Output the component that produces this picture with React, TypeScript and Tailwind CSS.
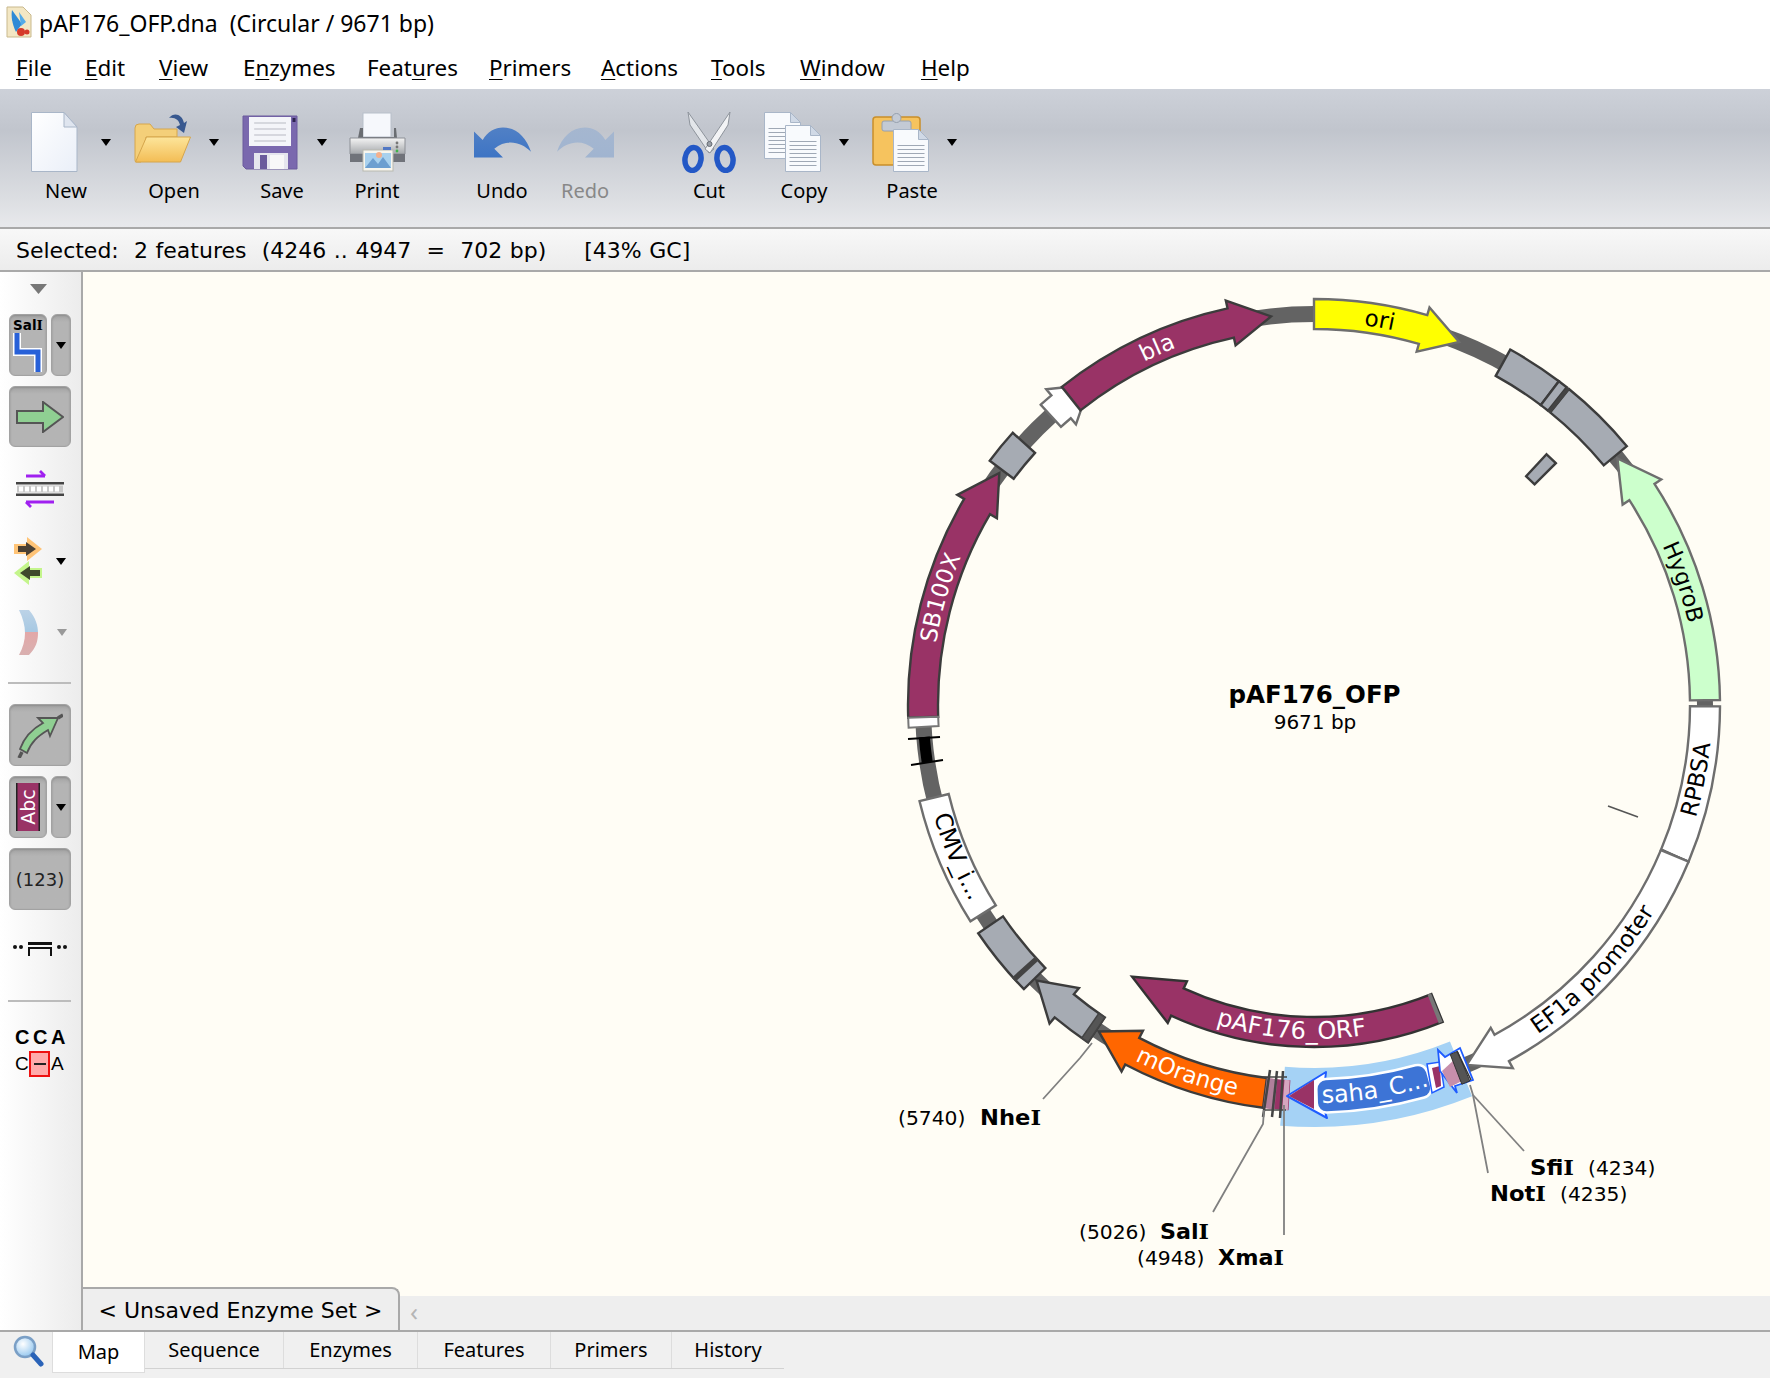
import React from "react";

const CX = 1314;
const CY = 705;
const pt = (r: number, t: number) => {
  const a = (t * Math.PI) / 180;
  return `${(CX + r * Math.sin(a)).toFixed(2)} ${(CY - r * Math.cos(a)).toFixed(2)}`;
};
const arcTo = (r: number, t0: number, t1: number) =>
  `A${r} ${r} 0 ${Math.abs(t1 - t0) > 180 ? 1 : 0} ${t1 > t0 ? 1 : 0} ${pt(r, t1)}`;
const arc = (r: number, t0: number, t1: number) => `M${pt(r, t0)} ${arcTo(r, t0, t1)}`;
const band = (t0: number, t1: number, r0 = 376, r1 = 406) =>
  `M${pt(r1, t0)} ${arcTo(r1, t0, t1)} L${pt(r0, t1)} ${arcTo(r0, t1, t0)} Z`;
const arrow = (t0: number, tb: number, tip: number, rc = 391) =>
  `M${pt(rc + 15, t0)} ${arcTo(rc + 15, t0, tb)} L${pt(rc + 23, tb)} L${pt(rc, tip)} L${pt(rc - 23, tb)} L${pt(rc - 15, tb)} ${arcTo(rc - 15, tb, t0)} Z`;

const MAROON = "#993366";
const FONT = "'DejaVu Sans', Verdana, sans-serif";

type Lab = { id: string; text: string; r: number; from: number; to: number; fill: string; size: number };
const labels: Lab[] = [
  { id: "l1", text: "SB100X", r: 383, from: 256, to: 316, fill: "#fff", size: 23 },
  { id: "l2", text: "bla", r: 383, from: 316, to: 356.6, fill: "#fff", size: 23 },
  { id: "l3", text: "ori", r: 383, from: -10, to: 29.4, fill: "#000", size: 23 },
  { id: "l4", text: "HygroB", r: 383, from: 41.6, to: 101.6, fill: "#000", size: 22.5 },
  { id: "l5", text: "RPBSA", r: 398, from: 131, to: 71, fill: "#000", size: 23 },
  { id: "l6", text: "EF1a promoter", r: 398, from: 170, to: 97, fill: "#000", size: 23 },
  { id: "l7", text: "saha_C...", r: 398, from: 191, to: 151, fill: "#fff", size: 24 },
  { id: "l8", text: "mOrange", r: 398, from: 229, to: 169, fill: "#fff", size: 23 },
  { id: "l9", text: "CMV_i...", r: 396, from: 277, to: 217, fill: "#000", size: 23.5 },
  { id: "l10", text: "pAF176_ORF", r: 334, from: 224, to: 144, fill: "#fff", size: 24 },
];

const SERIF_BOLD = "'DejaVu Serif', serif";

const EnzymeName = ({ x, y, w, name }: { x: number; y: number; w: number; name: string }) => (
  <text x={x} y={y} fontSize={21} fontWeight={700} textLength={w} lengthAdjust="spacingAndGlyphs" fill="#000">
    {name}
    <tspan fontFamily={SERIF_BOLD}>I</tspan>
  </text>
);

function arrowInner() {
  const rc = 327;
  const t0 = 157.9;
  const tb = 204.7;
  const tip = 213.8;
  return `M${pt(rc + 15, t0)} ${arcTo(rc + 15, t0, tb)} L${pt(rc + 23, tb)} L${pt(rc, tip)} L${pt(rc - 23, tb)} L${pt(rc - 15, tb)} ${arcTo(rc - 15, tb, t0)} Z`;
}

function Plasmid() {
  const st = { stroke: "#3c3c3c", strokeWidth: 2.4 };
  const lt = { stroke: "#6e6e6e", strokeWidth: 2.4 };
  return (
    <svg viewBox="83 272 1687 1024" width={1687} height={1024} className="block" style={{ fontFamily: FONT }}>
      <defs>
        {labels.map((l) => (
          <path key={l.id} id={l.id} d={arc(l.r, l.from, l.to)} />
        ))}
      </defs>

      <circle cx={CX} cy={CY} r={391} fill="none" stroke="#636363" strokeWidth={16} />

      <path d={band(261.6, 265.3, 391 - 5.5, 391 + 5.5)} fill="#000" />
      <line x1={908} y1={739} x2={940} y2={737} stroke="#000" strokeWidth={2} />
      <line x1={911} y1={765} x2={943} y2={760} stroke="#000" strokeWidth={2} />

      <path d={arrow(268.2, 300.5, 306.4)} fill={MAROON} {...st} />
      <path d={band(266.8, 268.2, 376, 406)} fill="#fff" stroke="#777" strokeWidth={2} />
      <path d={band(307, 312.1)} fill="#a6abb3" {...st} />
      <path d={arrow(317.7, 319.7, 325)} fill="#fff" {...lt} />
      <path d={arrow(321.6, 347.7, 353.7)} fill={MAROON} {...st} />
      <path d={arrow(0, 16.2, 21.8)} fill="#ffff00" {...lt} />
      <path d={band(28.9, 37.1)} fill="#a6abb3" {...st} />
      <path d={band(37.1, 38.5)} fill="#a6abb3" {...st} />
      <path d={band(38.9, 50.4)} fill="#a6abb3" {...st} />
      <path d={band(38.6, 38.9)} fill="#444" stroke="#444" strokeWidth={1.5} />
      <path d={band(42.85, 45, 312, 342)} fill="#a6abb3" {...st} />
      <path d={arrow(89.3, 57, 50.9)} fill="#ccffcc" {...lt} />
      <path d={band(90.2, 112.7)} fill="#fff" {...lt} />
      <line x1={1662} y1={850} x2={1688} y2={862} stroke="#666" strokeWidth={3} />
      <path d={arrow(112.7, 151.3, 157)} fill="#fff" {...lt} />

      <path d={arrow(213.8, 219.7, 225.2)} fill="#a6abb3" {...st} />
      <path d={band(213.8, 214.9)} fill="#555" stroke="#444" strokeWidth={1.5} />
      <path d={arrow(187.2, 207.7, 213.4)} fill="#ff6600" {...st} />
      <path d={band(225.6, 235.8)} fill="#a6abb3" {...st} />
      <path d={band(227.3, 227.8)} fill="#444" stroke="#444" strokeWidth={2} />
      <path d={band(237.8, 256.3)} fill="#fff" {...lt} />

      <path d={arrowInner()} fill={MAROON} stroke="#333" strokeWidth={2.4} />
      <path d={band(157.9, 158.6, 311, 342)} fill="#777" stroke="none" />

      <path d={band(158, 184.6, 363, 422)} fill="#a5d2f5" />

      <path d={band(183.6, 187, 376, 406)} fill={MAROON} />
      <path d={band(185.6, 187.2, 376, 406)} fill="#b07f9b" />
      <path d={band(183.7, 184.5, 376, 406)} fill="#d5a6bf" />
      <line x1={1270} y1={1070} x2={1263} y2={1117} stroke="#444" strokeWidth={2.5} />
      <line x1={1277} y1={1071} x2={1272} y2={1117} stroke="#444" strokeWidth={2.5} />
      <line x1={1283} y1={1071} x2={1280} y2={1118} stroke="#444" strokeWidth={2.5} />
      <line x1={1263} y1={1077} x2={1287} y2={1077} stroke="#444" strokeWidth={1.5} />
      <line x1={1263} y1={1110} x2={1286} y2={1110} stroke="#444" strokeWidth={1.5} />

      <polygon points="1287,1096 1326,1072 1325,1081 1325,1112 1327,1118" fill="#fff" stroke="#1f5cff" strokeWidth={2} strokeLinejoin="round" />
      <polygon points="1289,1096 1314,1080 1314,1109" fill={MAROON} />
      <path d={band(164.3, 178.2, 384, 398)} fill="#fff" stroke="#fff" strokeWidth={22} strokeLinejoin="round" />
      <path d={band(164.3, 178.2, 384, 398)} fill="#3d74d6" stroke="#3d74d6" strokeWidth={17} strokeLinejoin="round" />

      <polygon points="1427,1064 1440,1062 1444,1087 1432,1093" fill="#fff" stroke="#1f5cff" strokeWidth={1.5} />
      <polygon points="1432,1068 1440,1066 1441,1086 1436,1088" fill={MAROON} />
      <polygon points="1438,1050 1440,1071 1457,1093 1455,1086 1473,1080 1460,1048 1445,1057" fill="#fff" stroke="#1f5cff" strokeWidth={1.8} />
      <polygon points="1442,1071 1455,1059 1464,1080 1450,1087" fill="#c78fab" />
      <path d={band(157.5, 158.7, 375, 407)} fill="#555" stroke="#333" strokeWidth={1} />
      <line x1={1457} y1={1051} x2={1471} y2={1080} stroke="#333" strokeWidth={1.5} />

      <polyline points="1092,1043 1080,1058 1043,1099" fill="none" stroke="#808080" strokeWidth={1.8} />
      <polyline points="1264,1110 1263,1124 1213,1212" fill="none" stroke="#808080" strokeWidth={1.8} />
      <polyline points="1284,1105 1284,1235" fill="none" stroke="#808080" strokeWidth={1.8} />
      <polyline points="1470,1085 1473,1095 1488,1173" fill="none" stroke="#808080" strokeWidth={1.8} />
      <polyline points="1473,1095 1524,1151" fill="none" stroke="#808080" strokeWidth={1.8} />
      <line x1={1608} y1={806} x2={1638} y2={817} stroke="#555" strokeWidth={1.6} />

      {labels.map((l) => (
        <text key={l.id} fontSize={l.size} fill={l.fill} textAnchor="middle">
          <textPath href={`#${l.id}`} startOffset="50%">
            {l.text}
          </textPath>
        </text>
      ))}

      <text x={1314.5} y={703} fontSize={24.5} fontWeight={700} textAnchor="middle" fill="#000">pAF176_OFP</text>
      <text x={1315} y={729} fontSize={20} textAnchor="middle" fill="#000">9671 bp</text>

      <text x={898} y={1125} fontSize={20.3} fill="#000">(5740)</text>
      <EnzymeName x={980} y={1125} w={61} name="Nhe" />
      <text x={1079} y={1239} fontSize={20.3} fill="#000">(5026)</text>
      <EnzymeName x={1160} y={1239} w={49} name="Sal" />
      <text x={1137} y={1265} fontSize={20.3} fill="#000">(4948)</text>
      <EnzymeName x={1218} y={1265} w={66} name="Xma" />
      <EnzymeName x={1530} y={1175} w={44} name="Sfi" />
      <text x={1588} y={1175} fontSize={20.3} fill="#000">(4234)</text>
      <EnzymeName x={1490} y={1201} w={56} name="Not" />
      <text x={1560} y={1201} fontSize={20.3} fill="#000">(4235)</text>
    </svg>
  );
}

const Caret = ({ gray }: { gray?: boolean }) => (
  <svg width="10" height="7" viewBox="0 0 10 7" className="block">
    <polygon points="0,0 10,0 5,7" fill={gray ? "#999" : "#000"} />
  </svg>
);

const NewIcon = () => (
  <svg width="57" height="60" viewBox="0 0 57 60">
    <defs>
      <linearGradient id="ng" x1="0" y1="0" x2="1" y2="1">
        <stop offset="0" stopColor="#ffffff" />
        <stop offset="1" stopColor="#eaeff8" />
      </linearGradient>
    </defs>
    <path d="M5.500 .5H38L51 15V59.500H5.500Z" fill="url(#ng)" stroke="#a9b6c8" />
    <path d="M38 .5V15H51Z" fill="#dfe5ef" stroke="#a9b6c8" />
  </svg>
);

const OpenIcon = () => (
  <svg width="57" height="60" viewBox="0 0 57 60">
    <defs>
      <linearGradient id="og" x1="0" y1="0" x2="0" y2="1">
        <stop offset="0" stopColor="#fde59b" />
        <stop offset="1" stopColor="#f3bd55" />
      </linearGradient>
    </defs>
    <path d="M1 16Q1 12 5 12H16L20 17H43V25H12L7 50H2Q1 50 1 48Z" fill="#f4cf79" stroke="#d6a64c" />
    <path d="M13 25H57L47 50H2Z" transform="translate(-0.5 0)" fill="url(#og)" stroke="#d6a64c" />
    <path d="M35 6C40 0 48 2 50 11L53 9L50 21L42 15L46 13C45 8 41 5 35 6Z" fill="#38588f" />
  </svg>
);

const SaveIcon = () => (
  <svg width="57" height="60" viewBox="0 0 57 60">
    <path d="M1 4H55V57H4L1 54Z" fill="#7a68ae" stroke="#6a5a9c" />
    <rect x="7" y="5" width="42" height="29" fill="#f4f5f9" />
    <g stroke="#c2c4cc" strokeWidth="1.2">
      <line x1="12" y1="11" x2="44" y2="11" />
      <line x1="12" y1="17" x2="44" y2="17" />
      <line x1="12" y1="23" x2="44" y2="23" />
      <line x1="12" y1="29" x2="44" y2="29" />
    </g>
    <rect x="50.500" y="6" width="3" height="4" fill="#2d2350" />
    <path d="M12 57V41H46V57Z" fill="#e6e6ee" />
    <rect x="18" y="43" width="7" height="14" fill="#6a5a9c" />
    <rect x="28" y="43" width="14" height="14" fill="#f8f8f8" />
  </svg>
);

const PrintIcon = () => (
  <svg width="57" height="60" viewBox="0 0 57 60">
    <defs>
      <linearGradient id="pg" x1="0" y1="0" x2="0" y2="1">
        <stop offset="0" stopColor="#f4f4f4" />
        <stop offset="1" stopColor="#a5a8ac" />
      </linearGradient>
    </defs>
    <rect x="14" y="1" width="28" height="24" fill="#f6f8fc" stroke="#b8bfca" />
    <path d="M11 16H14V25H45V16H47L48 26H9Z" fill="#6a6d72" />
    <path d="M1 26H56V42H1Z" fill="url(#pg)" stroke="#8d9096" />
    <rect x="1" y="42" width="55" height="8" fill="#70737a" />
    <circle cx="48" cy="31" r="1.400" fill="#777" />
    <circle cx="48" cy="35" r="1.400" fill="#777" />
    <circle cx="48" cy="39" r="1.400" fill="#41b34a" />
    <rect x="14" y="38" width="30" height="21" fill="#f8f6ee" stroke="#b9b9b0" />
    <rect x="16" y="41" width="26" height="15" fill="#a9d1ee" />
    <path d="M16 56L24 46L29 52L34 45L42 56Z" fill="#6d9fd0" />
    <circle cx="30" cy="43" r="3" fill="#f4b08c" />
    <rect x="34" y="35" width="8" height="3" fill="#5278c4" />
  </svg>
);

const UndoIcon = ({ flip, fill }: { flip?: boolean; fill: string }) => (
  <svg width="59" height="31" viewBox="0 0 59 31" style={flip ? { transform: "scaleX(-1)" } : undefined}>
    <defs>
      <linearGradient id={flip ? "rg" : "ug"} x1="0" y1="0" x2="0" y2="1">
        <stop offset="0" stopColor={fill} stopOpacity="0.85" />
        <stop offset="1" stopColor={fill} />
      </linearGradient>
    </defs>
    <path d="M0 4L9 13C14 4 22 0 30 0C44 0 54 10 59 25C49 15 34 11 21 22L30 31H0Z" fill={`url(#${flip ? "rg" : "ug"})`} />
  </svg>
);

const CutIcon = () => (
  <svg width="57" height="62" viewBox="0 0 57 62">
    <path d="M7 1L33 38L28 42L9 14Z" fill="#e3e6ea" stroke="#8e949c" />
    <path d="M49 1L24 38L29 42L47 14Z" fill="#f3f4f6" stroke="#8e949c" />
    <g fill="none" stroke="#2358c6" strokeWidth="5.500">
      <ellipse cx="12" cy="48" rx="8" ry="11.500" transform="rotate(8 12 48)" />
      <ellipse cx="44" cy="48" rx="8" ry="11.500" transform="rotate(-8 44 48)" />
    </g>
    <circle cx="28.500" cy="33" r="2.500" fill="#9aa0a8" stroke="#676c74" />
  </svg>
);

const DocLines = ({ x, y, w, h, fold = 10 }: { x: number; y: number; w: number; h: number; fold?: number }) => {
  const lines = [];
  for (let yy = y + 16; yy < y + h - 3; yy += 4) lines.push(yy);
  return (
    <g>
      <path d={`M${x} ${y}H${x + w - fold}L${x + w} ${y + fold}V${y + h}H${x}Z`} fill="#f8fafd" stroke="#a9b6c8" />
      <path d={`M${x + w - fold} ${y}V${y + fold}H${x + w}Z`} fill="#d0d9e6" stroke="#a9b6c8" />
      {lines.map((yy) => (
        <line key={yy} x1={x + 4} x2={x + w - 4} y1={yy} y2={yy} stroke="#9fa8b5" strokeWidth="1" />
      ))}
    </g>
  );
};

const CopyIcon = () => (
  <svg width="57" height="60" viewBox="0 0 57 60">
    <DocLines x={0.5} y={0.5} w={36} h={46} />
    <DocLines x={21.5} y={13.5} w={35} h={46} />
  </svg>
);

const PasteIcon = () => (
  <svg width="57" height="60" viewBox="0 0 57 60">
    <rect x="1" y="5" width="47" height="48" rx="3" fill="#f6c35e" stroke="#c98f2a" strokeWidth="1.500" />
    <rect x="10" y="9" width="29" height="10" rx="2" fill="#c3cad5" stroke="#96a0ae" />
    <circle cx="24.500" cy="6" r="4.500" fill="#c3cad5" stroke="#96a0ae" />
    <DocLines x={21.5} y={17.5} w={35} h={42} />
  </svg>
);

type Btn = { label: string; w: string; icon: React.ReactNode; caret?: boolean; gray?: boolean };

const ToolBtn = ({ label, w, icon, caret, gray }: Btn) => (
  <div className={`flex flex-col ${w}`}>
    <div className={`flex items-center h-[62px] ${caret ? "pl-[14px] gap-[18px]" : "justify-center"}`}>
      <div className="flex items-center justify-center w-[57px] h-[62px] shrink-0">{icon}</div>
      {caret && <Caret />}
    </div>
    <div className={`text-center text-[20px] leading-[28px] mt-[4px] ${gray ? "text-[#888888]" : "text-black"}`}>{label}</div>
  </div>
);

const Menu = ({ first, rest, w }: { first: string; rest: string; w: string }) => {
  return (
    <div className={`${w} shrink-0`}>
      <span className="underline decoration-1 underline-offset-[3px]">{first}</span>
      {rest}
    </div>
  );
};

const GrayBtn = ({ className, children }: { className: string; children?: React.ReactNode }) => (
  <div className={`flex items-center justify-center rounded-[6px] border border-[#a2a2a2] bg-linear-to-b from-[#a4a4a4] to-[#b4b4b4] to-[12%] shadow-[inset_0_1px_2px_#8e8e8e] ${className}`}>
    {children}
  </div>
);

const Divider = ({ className }: { className: string }) => <div className={`ml-[8px] w-[63px] h-[2px] bg-[#bcbcbc] ${className}`} />;

function LeftPanel() {
  return (
    <div className="w-[81px] shrink-0 border-r-2 border-[#a9a9a9] box-content bg-linear-to-r from-white to-[#ececec] h-[1058px] overflow-hidden" style={{ fontFamily: FONT }}>
      <svg width="17" height="10" viewBox="0 0 17 10" className="block ml-[30px] mt-[12px]">
        <polygon points="0,0 17,0 8.500,10" fill="#777" />
      </svg>
      <div className="flex gap-[4px] ml-[9px] mt-[20px]">
        <GrayBtn className="w-[38px] h-[62px] items-start">
          <svg width="36" height="58" viewBox="0 0 36 58">
            <text x="18" y="15" textAnchor="middle" fontSize="13.500" fontWeight="700" fill="#000">
              Sal<tspan fontFamily={SERIF_BOLD}>I</tspan>
            </text>
            <path d="M7 18V37H28V57" fill="none" stroke="#fff" strokeWidth="8" />
            <path d="M7 18V37H28V57" fill="none" stroke="#2760d8" strokeWidth="5" />
          </svg>
        </GrayBtn>
        <GrayBtn className="w-[20px] h-[62px]">
          <Caret />
        </GrayBtn>
      </div>
      <GrayBtn className="ml-[9px] mt-[10px] w-[62px] h-[61px]">
        <svg width="48" height="32" viewBox="0 0 48 32">
          <path d="M1 10H27V1L47 16L27 31V22H1Z" fill="#8fcf92" stroke="#555" strokeWidth="2" />
        </svg>
      </GrayBtn>
      <svg width="48" height="38" viewBox="0 0 48 38" className="block ml-[16px] mt-[23px]">
        <path d="M10 6H29M24 1L29 6" fill="none" stroke="#a020f0" strokeWidth="2.800" />
        <path d="M10 32H38M10 32L15 37" fill="none" stroke="#a020f0" strokeWidth="2.800" />
        <rect x="0" y="12" width="48" height="2.500" fill="#444" />
        <rect x="0" y="23.500" width="48" height="2.500" fill="#444" />
        <rect x="1" y="15.500" width="46" height="7" fill="#c8c8c8" />
        <g fill="#fff">
          {[3, 9, 15, 21, 27, 33, 39].map((x) => (
            <rect key={x} x={x} y="16.500" width="4" height="5" />
          ))}
        </g>
      </svg>
      <div className="flex items-center mt-[29px] ml-[14px] h-[48px]">
        <svg width="28" height="48" viewBox="0 0 28 48" className="shrink-0">
          <path d="M0 7H13V0L28 12L13 24V17H0Z" fill="#ffc477" />
          <path d="M12 9V5L22 12L12 19V15H4V9Z" fill="#4a4034" />
          <path d="M28 31H15V24L0 36L15 48V41H28Z" fill="#c4f58c" />
          <path d="M16 33V29L6 36L16 43V39H26V33Z" fill="#3f4a2c" />
        </svg>
        <div className="ml-[14px]">
          <Caret />
        </div>
      </div>
      <div className="flex items-center mt-[25px] ml-[19px] h-[45px]">
        <svg width="20" height="45" viewBox="0 0 20 45" className="shrink-0">
          <defs>
            <linearGradient id="arcg" x1="0" y1="0" x2="0" y2="1">
              <stop offset="0" stopColor="#bcd3e7" />
              <stop offset="0.5" stopColor="#a6c8e2" />
              <stop offset="0.5" stopColor="#e2a8a8" />
              <stop offset="1" stopColor="#d9b0b0" />
            </linearGradient>
          </defs>
          <path d="M0 0H10C17 8 19 16 19 23C19 31 17 38 10 45H0C4 38 6 30 6 23C6 16 4 8 0 0Z" fill="url(#arcg)" />
        </svg>
        <div className="ml-[18px]">
          <Caret gray />
        </div>
      </div>
      <Divider className="mt-[27px]" />
      <GrayBtn className="ml-[9px] mt-[20px] w-[62px] h-[62px]">
        <svg width="46" height="46" viewBox="0 0 46 46">
          <path d="M3 37L10 41C14 30 21 24 31 18L33 24L41 6L21 6L26 11C15 17 7 26 3 37Z" fill="#8fcf92" stroke="#555" strokeWidth="1.800" />
          <path d="M41 6L46 3M5 40L2 46" stroke="#555" strokeWidth="3.500" />
        </svg>
      </GrayBtn>
      <div className="flex gap-[4px] ml-[9px] mt-[10px]">
        <GrayBtn className="w-[38px] h-[62px]">
          <svg width="24" height="48" viewBox="0 0 24 48">
            <rect x="0" y="0" width="24" height="48" fill="#993366" />
            <rect x="0" y="0" width="1.500" height="48" fill="#222" />
            <rect x="22.500" y="0" width="1.500" height="48" fill="#222" />
            <text x="12" y="24" transform="rotate(-90 12 24)" textAnchor="middle" dominantBaseline="central" fontSize="19" fill="#fff">Abc</text>
          </svg>
        </GrayBtn>
        <GrayBtn className="w-[20px] h-[62px]">
          <Caret />
        </GrayBtn>
      </div>
      <GrayBtn className="ml-[9px] mt-[10px] w-[62px] h-[62px] text-[18px] text-[#222]">(123)</GrayBtn>
      <svg width="54" height="16" viewBox="0 0 54 16" className="block ml-[13px] mt-[30px]">
        <g fill="#111">
          <circle cx="2" cy="7" r="2" />
          <circle cx="8" cy="7" r="2" />
          <circle cx="46" cy="7" r="2" />
          <circle cx="52" cy="7" r="2" />
          <rect x="15" y="2" width="24" height="3" />
          <path d="M15 7H39V16H37V9H17V16H15Z" />
        </g>
      </svg>
      <Divider className="mt-[44px]" />
      <div className="ml-[15px] mt-[23px] grid grid-cols-[18px_18px_18px] text-[20px] leading-[24px] font-bold text-black" style={{ fontFamily: "'Liberation Sans', Arial, sans-serif" }}>
        <span>C</span>
        <span>C</span>
        <span>A</span>
      </div>
      <div className="ml-[15px] mt-[2px] flex items-center text-[19px] h-[26px] text-black" style={{ fontFamily: "'Liberation Sans', Arial, sans-serif" }}>
        <span className="w-[14px]">C</span>
        <span className="w-[21px] h-[26px] border-2 border-[#ee1111] bg-[#ffaaaa] flex items-center justify-center">
          <span className="block w-[12px] h-[2px] bg-[#222]" />
        </span>
        <span className="ml-[1px]">A</span>
      </div>
    </div>
  );
}

export default function App() {
  return (
    <div className="w-[1770px] h-[1378px] flex flex-col overflow-hidden bg-[#f0f0f0] text-black" style={{ fontFamily: "'Noto Sans', sans-serif" }}>
      <div className="h-[44px] bg-white flex items-center pl-[6px] shrink-0">
        <svg width="26" height="32" viewBox="0 0 26 32">
          <path d="M1 1H17L25 9V31H1Z" fill="#f3e7c4" stroke="#c9b98d" />
          <path d="M6 4L16 18L10 26C6 18 5 10 6 4Z" fill="#2f8ad6" />
          <path d="M13 6L20 16L15 20Z" fill="#54abe8" />
          <circle cx="15" cy="26" r="4" fill="#d63a2a" />
          <circle cx="21" cy="26" r="2.500" fill="#d63a2a" />
        </svg>
        <div className="ml-[7px] pt-[3px] text-[23px] whitespace-pre">pAF176_OFP.dna  (Circular / 9671 bp)</div>
      </div>
      <div className="h-[45px] bg-white flex items-center pl-[16px] pt-[2px] text-[22.400px] shrink-0">
        <Menu first="F" rest="ile" w="w-[69px]" />
        <Menu first="E" rest="dit" w="w-[74px]" />
        <Menu first="V" rest="iew" w="w-[84px]" />
        <div className="w-[124px] shrink-0">
          E<span className="underline decoration-1 underline-offset-[3px]">n</span>zymes
        </div>
        <div className="w-[122px] shrink-0">
          Feat<span className="underline decoration-1 underline-offset-[3px]">u</span>res
        </div>
        <Menu first="P" rest="rimers" w="w-[112px]" />
        <Menu first="A" rest="ctions" w="w-[110px]" />
        <Menu first="T" rest="ools" w="w-[89px]" />
        <Menu first="W" rest="indow" w="w-[121px]" />
        <Menu first="H" rest="elp" w="w-[60px]" />
      </div>
      <div className="h-[116px] shrink-0 flex pl-[12px] pt-[22px] bg-[linear-gradient(#cdd1d9,#c1c5cd_30%,#dcdee2_80%,#e8e9ec)] border-b-2 border-[#a9a9a9] box-content">
        <ToolBtn label="New" w="w-[108px]" icon={<NewIcon />} caret />
        <ToolBtn label="Open" w="w-[108px]" icon={<OpenIcon />} caret />
        <ToolBtn label="Save" w="w-[108px]" icon={<SaveIcon />} caret />
        <ToolBtn label="Print" w="w-[82px]" icon={<PrintIcon />} />
        <div className="w-[48px]" />
        <ToolBtn label="Undo" w="w-[72px]" icon={<UndoIcon fill="#3d74c4" />} />
        <div className="w-[11px]" />
        <ToolBtn label="Redo" w="w-[72px]" icon={<UndoIcon flip fill="#a0b4d0" />} gray />
        <div className="w-[52px]" />
        <ToolBtn label="Cut" w="w-[72px]" icon={<CutIcon />} />
        <div className="w-[5px]" />
        <ToolBtn label="Copy" w="w-[108px]" icon={<CopyIcon />} caret />
        <ToolBtn label="Paste" w="w-[108px]" icon={<PasteIcon />} caret />
      </div>
      <div className="h-[39px] shrink-0 flex items-center pl-[16px] pt-[2px] text-[22px] [word-spacing:0.6px] whitespace-pre bg-linear-to-b from-[#f8f8f8] to-[#ececec] border-b-2 border-[#a9a9a9] box-content" style={{ fontFamily: FONT }}>
        Selected:  2 features  (4246 .. 4947  =  702 bp)     [43% GC]
      </div>
      <div className="flex flex-1 min-h-0">
        <LeftPanel />
        <div className="flex-1 min-w-0 flex flex-col">
          <div className="h-[1024px] bg-[#fffdf5] overflow-hidden shrink-0">
            <Plasmid />
          </div>
          <div className="flex-1 bg-[#eeeeee] flex items-start">
            <div className="-mt-[9px] relative h-[43px] w-[319px] -ml-[2px] pt-[1px] bg-[#eeeeee] border-2 border-b-0 border-[#a9a9a9] rounded-tr-[8px] flex items-center justify-center text-[22px] whitespace-pre" style={{ fontFamily: FONT }}>
              &lt; Unsaved Enzyme Set &gt;
            </div>
            <div className="ml-[10px] mt-[-1px] text-[26px] leading-[32px] text-[#b5b5b5]">‹</div>
          </div>
        </div>
      </div>
      <div className="h-[46px] shrink-0 border-t-2 border-[#a9a9a9] box-content flex items-start text-[20px] bg-[#f0f0f0]">
        <div className="w-[52px] h-[38px] flex items-center pl-[13px]">
          <svg width="31" height="32" viewBox="0 0 31 32">
            <defs>
              <radialGradient id="lg" cx="0.4" cy="0.35" r="0.7">
                <stop offset="0" stopColor="#ffffff" />
                <stop offset="1" stopColor="#8fc4ee" />
              </radialGradient>
            </defs>
            <circle cx="12" cy="12" r="10" fill="url(#lg)" stroke="#7a9fc6" strokeWidth="2.500" />
            <line x1="20" y1="20" x2="28" y2="29" stroke="#2a63b8" strokeWidth="5" strokeLinecap="round" />
          </svg>
        </div>
        <div className="w-[93px] h-[41px] bg-white border-x border-b border-[#dddddd] flex items-center justify-center">Map</div>
        <div className="flex h-[37px] border-b border-[#d2d2d2]">
          {[
            ["Sequence", "w-[139px]"],
            ["Enzymes", "w-[134px]"],
            ["Features", "w-[133px]"],
            ["Primers", "w-[121px]"],
            ["History", "w-[112px]"],
          ].map(([t, w]) => (
            <div key={t} className={`${w} flex items-center justify-center ${t === "History" ? "" : "border-r border-[#dddddd]"}`}>
              {t}
            </div>
          ))}
        </div>
      </div>
    </div>
  );
}
